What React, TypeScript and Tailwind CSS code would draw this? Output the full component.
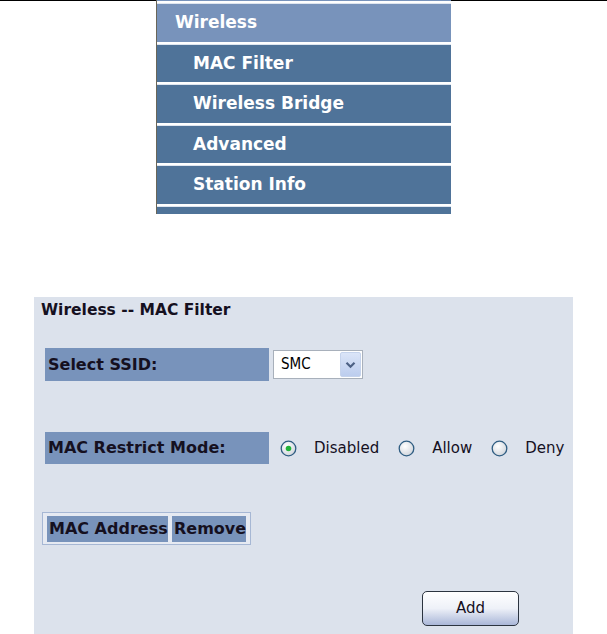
import React from "react";

const F = { fontFamily: '"DejaVu Sans", Verdana, sans-serif' };

function Radio({ checked, id }: { checked?: boolean; id: string }) {
  return (
    <svg width="17" height="17" viewBox="0 0 17 17" className="shrink-0 block">
      <defs>
        <radialGradient id={id} cx="0.4" cy="0.35" r="0.7">
          <stop offset="0" stopColor="#ffffff" />
          <stop offset="1" stopColor="#cfd4db" />
        </radialGradient>
      </defs>
      <circle cx="8.5" cy="8.5" r="7.3" fill={`url(#${id})`} stroke="#2f5d82" strokeWidth="1.3" />
      {checked && <circle cx="8.5" cy="8.5" r="2.8" fill="#22b33a" />}
    </svg>
  );
}

export default function App() {
  const items = [
    { label: "MAC Filter", h: "h-[37px]" },
    { label: "Wireless Bridge", h: "h-[38px]" },
    { label: "Advanced", h: "h-[37px]" },
    { label: "Station Info", h: "h-[38px]" },
  ];
  return (
    <div className="w-[607px] h-[634px] bg-white overflow-hidden flex flex-col" style={F}>
      {/* top: line + menu */}
      <div className="flex">
        <div className="w-[156px] h-px bg-black" />
        <div className="w-[295px] flex flex-col border-l border-[#6a6658]">
          <div className="h-px bg-[#7893bb]" />
          <div className="h-[3px] bg-white border-b border-[#dfe6f0]" />
          <div className="h-[38px] bg-[#7893bb] flex items-center pl-[18px] text-white font-bold text-[17px]">
            Wireless
          </div>
          {items.map((it) => (
            <React.Fragment key={it.label}>
              <div className="h-[3px] bg-white border-b border-[#dfe6f0]" />
              <div className={`${it.h} bg-[#4f7399] flex items-center pl-[36px] text-white font-bold text-[17px]`}>
                {it.label}
              </div>
            </React.Fragment>
          ))}
          <div className="h-[3px] bg-white border-b border-[#dfe6f0]" />
          <div className="h-[7px] bg-[#4f7399]" />
        </div>
        <div className="flex-1 h-px bg-black" />
      </div>

      {/* panel */}
      <div className="mt-[83px] ml-[34px] w-[539px] flex-1 bg-[#dce2ec] pl-[7px] flex flex-col text-[#15101f]">
        <div className="mt-[4px] h-[20px] flex items-center font-bold text-[15.5px]">Wireless -- MAC Filter</div>

        <div className="mt-[27px] ml-[4px] flex items-center">
          <div className="w-[224px] h-[33px] bg-[#7893bb] flex items-center pl-[3px] font-bold text-[16px]">
            Select SSID:
          </div>
          <div className="ml-[4px] w-[90px] h-[29px] bg-white border border-[#a8b0bb] flex items-center justify-between pl-[7px] pr-[1px]">
            <span
              className="text-[15px] text-black"
              style={{ fontFamily: '"DejaVu Sans Condensed", "DejaVu Sans", sans-serif', fontStretch: "condensed" }}
            >
              SMC
            </span>
            <div className="w-[21px] h-[25px] rounded-[2px] bg-gradient-to-b from-[#dbe5f8] to-[#bccdee] border border-[#c5d3ec] flex items-center justify-center">
              <svg width="11" height="8" viewBox="0 0 11 8">
                <path d="M1.5 1.8 L5.5 5.8 L9.5 1.8" fill="none" stroke="#4d6185" strokeWidth="2.2" />
              </svg>
            </div>
          </div>
        </div>

        <div className="mt-[51px] ml-[4px] flex items-center">
          <div className="w-[224px] h-[32px] bg-[#7893bb] flex items-center pl-[3px] font-bold text-[16px]">
            MAC Restrict Mode:
          </div>
          <div className="ml-[11px] flex items-center text-[15px]">
            <Radio checked id="r1" />
            <span className="ml-[17px]">Disabled</span>
            <span className="ml-[19px]">
              <Radio id="r2" />
            </span>
            <span className="ml-[17px]">Allow</span>
            <span className="ml-[19px]">
              <Radio id="r3" />
            </span>
            <span className="ml-[17px]">Deny</span>
          </div>
        </div>

        <div className="mt-[48px] ml-[1px] w-[209px] h-[33px] border border-[#a6b7d4] bg-[#e6eaf2] flex items-center gap-[4px] px-[4px]">
          <div className="w-[121px] h-[26px] bg-[#7893bb] flex items-center pl-[2px] font-bold text-[16px]">MAC Address</div>
          <div className="w-[74px] h-[26px] bg-[#7893bb] flex items-center pl-[2px] font-bold text-[16px]">Remove</div>
        </div>

        <div className="mt-[46px] ml-[381px] w-[97px] h-[35px] rounded-[5px] border border-[#2c3440] bg-gradient-to-b from-white via-[#eef1f8] to-[#aab7d8] flex items-center justify-center text-[15px]">
          Add
        </div>
      </div>
    </div>
  );
}
